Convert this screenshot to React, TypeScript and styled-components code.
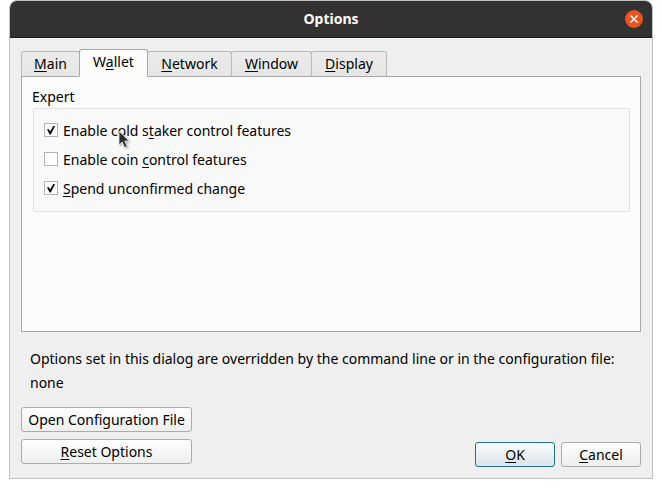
import React, { useState } from "react";
import styled, { createGlobalStyle } from "styled-components";

const GlobalStyle = createGlobalStyle`
  *, *::before, *::after { box-sizing: border-box; }
  body {
    margin: 0;
    background: #fff;
    color: #000;
    font-family: "Noto Sans", "Open Sans", sans-serif;
    font-size: 14px;
    line-height: 24px;
  }
  button, input { font: inherit; color: inherit; margin: 0; }
`;

const Page = styled.div`
  display: flex;
  min-height: 100vh;
  padding: 0 9px 9px;
`;

const Dialog = styled.main`
  flex: 1;
  display: flex;
  flex-direction: column;
  border: 1px solid #c0c1c0;
  border-radius: 8px 8px 0 0;
  background: #efefef;
  overflow: hidden;
`;

const TitleBar = styled.header`
  display: grid;
  grid-template-columns: 1fr auto 1fr;
  align-items: center;
  height: 37px;
  padding: 0 9px;
  background: #333132;
  border-bottom: 1px solid #1f1e1e;
  color: #fff;
`;

const Title = styled.h1`
  grid-column: 2;
  margin: 0;
  font-size: 14px;
  font-weight: 700;
`;

const CloseButton = styled.button`
  justify-self: end;
  display: flex;
  padding: 0;
  border: 0;
  background: none;
`;

const Content = styled.div`
  flex: 1;
  display: flex;
  flex-direction: column;
  padding: 11px;
`;

const TabList = styled.div`
  display: flex;
  align-items: flex-end;
  height: 28px;
  margin-bottom: -1px;
`;

const Tab = styled.button<{ $active: boolean; $width: number }>`
  position: relative;
  z-index: ${(p) => (p.$active ? 1 : 0)};
  min-width: ${(p) => p.$width}px;
  height: ${(p) => (p.$active ? 28 : 26)}px;
  margin-right: -1px;
  padding: 0 8px ${(p) => (p.$active ? 2 : 0)}px;
  border: 1px solid ${(p) => (p.$active ? "#a9a9a9" : "#b9b9b9")};
  border-bottom-color: ${(p) => (p.$active ? "#fcfcfc" : "#a9a9a9")};
  border-radius: 3px 3px 0 0;
  background: ${(p) => (p.$active ? "#fcfcfc" : "linear-gradient(#ebebeb, #e6e6e6)")};
  line-height: 24px;
`;

const TabPane = styled.section`
  flex: 1;
  padding: 8px 10px 12px;
  border: 1px solid #a9a9a9;
  background: #fcfcfc;
`;

const Group = styled.fieldset`
  margin: 0;
  padding: 0;
  border: 0;
`;

const GroupTitle = styled.legend`
  padding: 0;
  line-height: 23px;
`;

const GroupBox = styled.div`
  display: flex;
  flex-direction: column;
  gap: 5px;
  margin-left: 1px;
  padding: 10px;
  border: 1px solid #e0e0e0;
  border-radius: 2px;
  background: #f9f9f9;
`;

const CheckRow = styled.label`
  position: relative;
  display: flex;
  align-items: center;
  align-self: flex-start;
  gap: 5px;
`;

const CheckFrame = styled.span`
  display: grid;
  width: 14px;
  height: 14px;
  margin-bottom: 2px;
  > * { grid-area: 1 / 1; }
`;

const CheckInput = styled.input`
  appearance: none;
  width: 14px;
  height: 14px;
  border: 1px solid #b4b4b4;
  background: #fff;
  & + svg { visibility: hidden; pointer-events: none; }
  &:checked + svg { visibility: visible; }
`;

const Pointer = styled.svg`
  position: absolute;
  left: 74px;
  top: 11px;
  pointer-events: none;
  filter: drop-shadow(1px 1px 1px #0005);
`;

const Notice = styled.p`
  margin: 15px 8px 12px;
  padding-left: 1px;
`;

const Footer = styled.footer`
  display: flex;
  justify-content: space-between;
  align-items: flex-end;
`;

const FileActions = styled.div`
  display: flex;
  flex-direction: column;
  gap: 7px;
  min-width: 171px;
  margin-bottom: 3px;
`;

const DialogActions = styled.div`
  display: flex;
  gap: 6px;
`;

const PushButton = styled.button<{ $primary?: boolean }>`
  min-width: 80px;
  height: 25px;
  padding: 0 3px;
  border: 1px solid ${(p) => (p.$primary ? "#1f6f9f" : "#ababab")};
  border-radius: 3px;
  background: ${(p) =>
    p.$primary ? "linear-gradient(#fafcfd, #dbe4ea)" : "linear-gradient(#fefefe, #efefef)"};
  line-height: 22px;
  white-space: nowrap;
`;

const AccessKey = styled.u`
  text-decoration-thickness: 1px;
  text-underline-offset: 2px;
  text-decoration-skip-ink: none;
`;

/* An ampersand marks the letter that is the keyboard accelerator. */
function Mnemonic({ text }: { text: string }) {
  const at = text.indexOf("&");
  if (at < 0) return <>{text}</>;
  return (
    <span>
      {text.slice(0, at)}
      <AccessKey>{text[at + 1]}</AccessKey>
      {text.slice(at + 2)}
    </span>
  );
}

function CheckOption(props: { text: string; initial: boolean; children?: React.ReactNode }) {
  const [checked, setChecked] = useState(props.initial);
  return (
    <CheckRow>
      <CheckFrame>
        <CheckInput type="checkbox" checked={checked} onChange={() => setChecked(!checked)} />
        <svg width="14" height="14" viewBox="0 0 14 14" aria-hidden="true">
          <path d="M3 6.6 L4.6 6 L6.2 8.2 L9.4 2.8 L11 3.2 L6.8 11.4 H5.6 Z" fill="#0c0c0c" />
        </svg>
      </CheckFrame>
      <Mnemonic text={props.text} />
      {props.children}
    </CheckRow>
  );
}

const tabs = [
  { label: "&Main", width: 59 },
  { label: "W&allet", width: 69 },
  { label: "&Network", width: 85 },
  { label: "&Window", width: 81 },
  { label: "&Display", width: 76 },
];

export default function App() {
  const [active, setActive] = useState("W&allet");
  return (
    <Page>
      <GlobalStyle />
      <Dialog>
        <TitleBar>
          <Title>Options</Title>
          <CloseButton aria-label="Close">
            <svg width="18" height="18" viewBox="0 0 18 18" aria-hidden="true">
              <circle cx="9" cy="9" r="9" fill="#e95420" />
              <path d="M5.5 5.5 L12.5 12.5 M12.5 5.5 L5.5 12.5" stroke="#fff" strokeWidth="1.5" />
            </svg>
          </CloseButton>
        </TitleBar>
        <Content>
          <TabList role="tablist">
            {tabs.map(({ label, width }) => (
              <Tab
                key={label}
                role="tab"
                aria-selected={label === active}
                $active={label === active}
                $width={width}
                onClick={() => setActive(label)}
              >
                <Mnemonic text={label} />
              </Tab>
            ))}
          </TabList>
          <TabPane role="tabpanel">
            <Group>
              <GroupTitle>Expert</GroupTitle>
              <GroupBox>
                <CheckOption text="Enable cold s&taker control features" initial>
                  <Pointer width="13" height="20" viewBox="0 0 13 20" aria-hidden="true">
                    <path
                      d="M1 1 V15 L4.2 12 L6.6 17.6 L9.2 16.5 L6.8 11 H11.2 Z"
                      fill="#2d2d2d"
                      stroke="#f4f4f4"
                      strokeWidth="0.8"
                    />
                  </Pointer>
                </CheckOption>
                <CheckOption text="Enable coin &control features" initial={false} />
                <CheckOption text="&Spend unconfirmed change" initial />
              </GroupBox>
            </Group>
          </TabPane>
          <Notice>
            Options set in this dialog are overridden by the command line or in the configuration
            file:
            <br />
            none
          </Notice>
          <Footer>
            <FileActions>
              <PushButton>Open Configuration File</PushButton>
              <PushButton>
                <Mnemonic text="&Reset Options" />
              </PushButton>
            </FileActions>
            <DialogActions>
              <PushButton $primary>
                <Mnemonic text="&OK" />
              </PushButton>
              <PushButton>
                <Mnemonic text="&Cancel" />
              </PushButton>
            </DialogActions>
          </Footer>
        </Content>
      </Dialog>
    </Page>
  );
}
